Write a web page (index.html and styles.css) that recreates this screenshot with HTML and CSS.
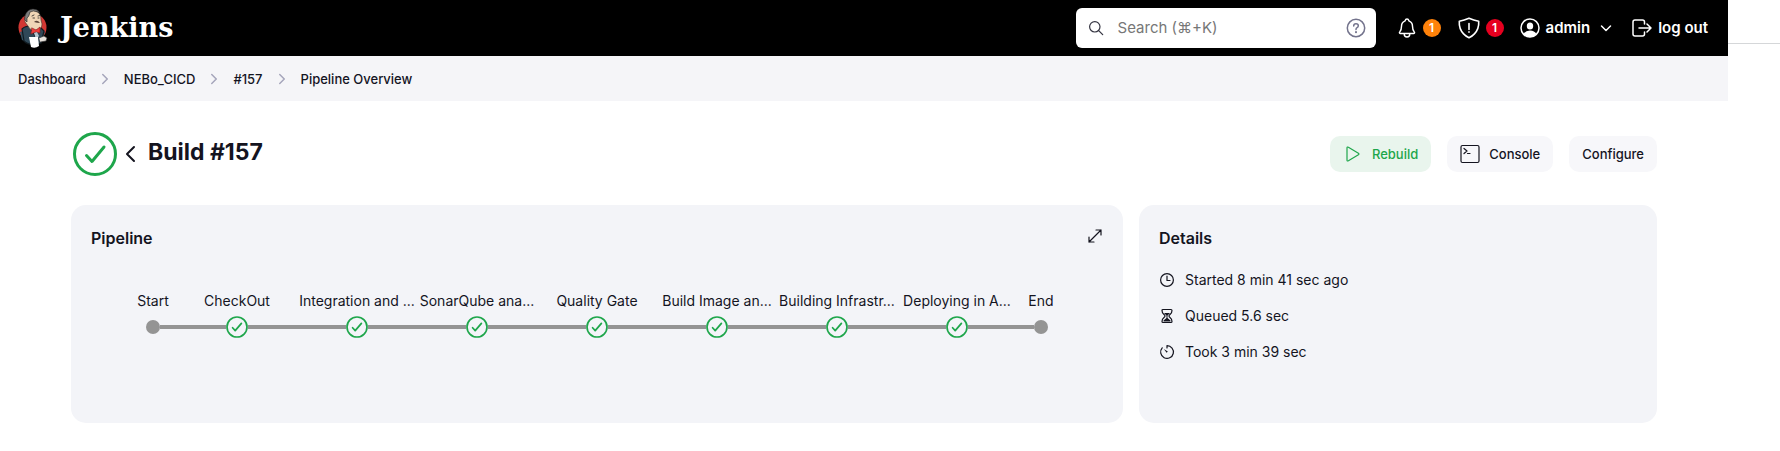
FILE: index.html
```html
<!DOCTYPE html>
<html lang="en">
<head>
<meta charset="utf-8">
<title>Build #157 - Jenkins</title>
<link rel="stylesheet" href="styles.css">
</head>
<body>
<svg class="sprite" aria-hidden="true">
  <symbol id="chevron-right" viewBox="0 0 512 512"><path d="M184 112l144 144-144 144"/></symbol>
  <symbol id="status-ok" viewBox="0 0 22 22"><circle cx="11" cy="11" r="10"/><path d="M6.6 11.7l2.6 2.9 6.2-7.2"/></symbol>
</svg>
<div class="shell">
  <div class="app">
    <header class="header">
      <a class="brand" href="#">
        <svg class="brand-logo" viewBox="0 0 30 40" aria-hidden="true">
          <circle cx="14.500" cy="19.500" r="14" fill="#d33833"/>
          <path d="M2 24l2 8 7 3h12l4-11-7-5-8 2z" fill="#335061"/>
          <path d="M4 21q3-3 8-3l5 10 5-9 4 4-3 12q-11 4-17-2z" fill="#2f4858" stroke="#111b21"/>
          <path d="M8 6q4-5 10-3 5 2 5 9l1 4q0 5-5 6-6 2-9-4l-3-4q-1-5 1-8z" fill="#f0d6b7" stroke="#37302b" stroke-width=".6"/>
          <path d="M7 8Q9 1 15 1q5 0 7 4l-2-1q-5-2-8 0-1 5-3 6v4l-2-2z" fill="#7d7d7d" stroke="#222" stroke-width=".6"/>
          <path d="M14 8l2-1M20 8l2-.5M15 10h1.500M20 10h1" stroke="#222" fill="none" stroke-width=".8"/>
          <path d="M16 14q3-3 6 1-3 0-6-1z" fill="#5a4337"/>
          <path d="M14 20l4 2 4-3v6l-4-1-5 2z" fill="#ef3d3a" stroke="#7d1919" stroke-width=".6"/>
          <path d="M16 25l3-1 2 4-3 3z" fill="#b7c5ce"/>
          <path d="M11 29h9l1 9q-4 3-8 1z" fill="#fff"/>
          <path d="M21 30l5-2 3 2-1 3-6 1z" fill="#e6e0da" stroke="#333" stroke-width=".6"/>
        </svg>
        <span>Jenkins</span>
      </a>
      <form class="search" role="search">
        <svg class="icon-16" viewBox="0 0 16 16" aria-hidden="true"><circle cx="6.800" cy="6.800" r="5.200"/><path d="M10.700 10.700l4 4"/></svg>
        <input type="text" aria-label="Search" placeholder="Search (⌘+K)">
        <a class="search-help" href="#" aria-label="Search help">
          <svg class="icon-20" viewBox="0 0 20 20" aria-hidden="true"><circle cx="10" cy="10" r="8.700"/><path d="M7.700 8q0-2.200 2.300-2.200T12.300 7.800q0 1.300-1.200 1.900T10 11.600"/><path d="M10 14v.2" stroke-width="2"/></svg>
        </a>
      </form>
      <nav class="header-nav" aria-label="User">
        <a class="alert" href="#" aria-label="Notifications, 1">
          <svg class="icon-22" viewBox="0 0 512 512" aria-hidden="true"><path d="M427.680 351.430C402 320 383.870 304 383.870 217.350 383.870 138 343.350 109.730 310 96c-4.430-1.820-8.600-6-9.950-10.550C294.200 65.540 277.800 48 256 48s-38.210 17.550-44 37.470c-1.350 4.600-5.520 8.710-9.950 10.530-33.390 13.750-73.870 41.920-73.870 121.350C128.130 304 110 320 84.320 351.430 73.680 364.450 83 384 101.610 384h308.880c18.510 0 27.770-19.610 17.190-32.570zM320 384v16a64 64 0 01-128 0v-16"/></svg>
          <span class="badge badge-orange">1</span>
        </a>
        <a class="alert" href="#" aria-label="Security warnings, 1">
          <svg class="icon-24" viewBox="0 0 512 512" aria-hidden="true"><path d="M463.120 112.370C373.680 96.330 336.710 84.450 256 48c-80.710 36.450-117.680 48.330-207.120 64.370C32.700 369.130 240.580 457.790 256 464c15.420-6.210 223.300-94.870 207.120-351.630zM256 160v128M256 338v6"/></svg>
          <span class="badge badge-red">1</span>
        </a>
        <a class="account" href="#">
          <svg class="icon-20" viewBox="0 0 20 20" aria-hidden="true"><circle cx="10" cy="10" r="9"/><path class="solid" d="M10 4.500a3.200 3.500 0 010 7 3.200 3.500 0 010-7zM3.500 16q2-3.500 6.500-3.500t6.500 3.500q-2.500 3-6.500 3t-6.500-3z"/></svg>
          <span>admin</span>
          <svg class="icon-12 caret" viewBox="0 0 12 12" aria-hidden="true"><path d="M1.500 4L6 8.500 10.500 4"/></svg>
        </a>
        <a class="logout" href="#">
          <svg class="icon-20" viewBox="0 0 20 20" aria-hidden="true"><path d="M12.500 6V4q0-2-2-2H3Q1 2 1 4v12q0 2 2 2h7.500q2 0 2-2v-2M7 10h12M15 6l4 4-4 4"/></svg>
          <span>log out</span>
        </a>
      </nav>
    </header>
    <nav class="breadcrumbs" aria-label="Breadcrumb">
      <a href="#">Dashboard</a>
      <svg class="icon-16" aria-hidden="true"><use href="#chevron-right"/></svg>
      <a href="#">NEBo_CICD</a>
      <svg class="icon-16" aria-hidden="true"><use href="#chevron-right"/></svg>
      <a href="#">#157</a>
      <svg class="icon-16" aria-hidden="true"><use href="#chevron-right"/></svg>
      <a href="#">Pipeline Overview</a>
    </nav>
    <main class="content">
      <div class="title-bar">
        <svg class="title-status" viewBox="0 0 46 46" role="img" aria-label="Success"><circle cx="24" cy="23" r="20.500"/><path d="M15.500 24.500l5.500 6L33 16"/></svg>
        <a class="back" href="#" aria-label="Back"><svg viewBox="0 0 12 18" aria-hidden="true"><path d="M9 2L2 9l7 7"/></svg></a>
        <h1>Build #157</h1>
        <div class="actions">
          <button class="button button-green" type="button">
            <svg class="icon-20" viewBox="0 0 20 20" aria-hidden="true"><path d="M4 4v12q0 1.500 1.400.8l10-6q1-.8 0-1.600l-10-6Q4 2.500 4 4z"/></svg>
            Rebuild
          </button>
          <button class="button" type="button">
            <svg class="icon-20" viewBox="0 0 20 20" aria-hidden="true"><rect x="1" y="1.500" width="18" height="17" rx="1.500"/><path d="M4 4.500l3 2.500-3 2.500M7.500 9.500H10"/></svg>
            Console
          </button>
          <button class="button" type="button">Configure</button>
        </div>
      </div>
      <div class="cards">
        <section class="card pipeline">
          <div class="card-head">
            <h2>Pipeline</h2>
            <a href="#" aria-label="Expand pipeline"><svg class="icon-16" viewBox="0 0 16 16" aria-hidden="true"><path d="M9 2h5v5M14 2L2 14M2 9v5h5"/></svg></a>
          </div>
          <ol class="stages">
            <li class="stage end-point first"><span class="label">Start</span><span class="track"><i class="dot"></i></span></li>
            <li class="stage"><span class="label">CheckOut</span><span class="track"><svg class="node"><use href="#status-ok"/></svg></span></li>
            <li class="stage"><span class="label">Integration and ...</span><span class="track"><svg class="node"><use href="#status-ok"/></svg></span></li>
            <li class="stage"><span class="label">SonarQube ana...</span><span class="track"><svg class="node"><use href="#status-ok"/></svg></span></li>
            <li class="stage"><span class="label">Quality Gate</span><span class="track"><svg class="node"><use href="#status-ok"/></svg></span></li>
            <li class="stage"><span class="label">Build Image an...</span><span class="track"><svg class="node"><use href="#status-ok"/></svg></span></li>
            <li class="stage"><span class="label">Building Infrastr...</span><span class="track"><svg class="node"><use href="#status-ok"/></svg></span></li>
            <li class="stage"><span class="label">Deploying in A...</span><span class="track"><svg class="node"><use href="#status-ok"/></svg></span></li>
            <li class="stage end-point last"><span class="label">End</span><span class="track"><i class="dot"></i></span></li>
          </ol>
        </section>
        <section class="card details">
          <h2>Details</h2>
          <ul>
            <li><svg class="icon-16" viewBox="0 0 16 16" aria-hidden="true"><circle cx="8" cy="8" r="6.400"/><path d="M8 4v4.500h3"/></svg>Started 8 min 41 sec ago</li>
            <li><svg class="icon-16" viewBox="0 0 16 16" aria-hidden="true"><path d="M4 1.500h8q1 0 1 1Q13 5 11 6.500q-2 1.500 0 3 2 1.500 2 4 0 1-1 1H4q-1 0-1-1Q3 11 5 9.500q2-1.500 0-3Q3 5 3 2.500q0-1 1-1z"/><path class="solid" d="M5 5h6L8.500 7.500v2.500l3 2.500v1h-7v-1l3-2.500V7.500z"/></svg>Queued 5.6 sec</li>
            <li><svg class="icon-16" viewBox="0 0 16 16" aria-hidden="true"><path d="M8 4V1.600A6.400 6.400 0 113.200 3.800"/><path class="solid" d="M4.800 5l4 2.600-1.200 1.200z"/></svg>Took 3 min 39 sec</li>
          </ul>
        </section>
      </div>
    </main>
  </div>
  <div class="side" aria-hidden="true"></div>
</div>
</body>
</html>
```
FILE: styles.css
```css
* { box-sizing: border-box; }

body {
  margin: 0;
  background: #fff;
  color: #14141f;
  font: 14px/20px Inter, "Noto Sans", sans-serif;
}

a { color: inherit; text-decoration: none; }
h1, h2, ul, ol { margin: 0; padding: 0; }
ul, ol { list-style: none; }
svg { flex: none; fill: none; stroke: currentColor; stroke-width: 1.2; stroke-linecap: round; stroke-linejoin: round; }
svg[viewBox="0 0 512 512"] { stroke-width: 32; }
.solid { fill: currentColor; stroke: none; }
.sprite { position: absolute; width: 0; height: 0; }
.icon-12 { width: 12px; height: 12px; }
.icon-16 { width: 16px; height: 16px; }
.icon-20 { width: 20px; height: 20px; }
.icon-22 { width: 22px; height: 22px; }
.icon-24 { width: 24px; height: 24px; }

.shell { display: grid; grid-template-columns: 1fr 52px; }
.side { height: 44px; border-bottom: 1px solid #d5d7d9; }

.header {
  display: flex;
  align-items: center;
  height: 56px;
  padding: 0 20px 0 18px;
  background: #000;
  color: #fff;
}
.brand { display: flex; align-items: center; gap: 12px; margin-right: auto; font: bold 27px/40px "DejaVu Serif", serif; }
.brand-logo { width: 30px; height: 40px; stroke: none; }

.search {
  display: flex;
  align-items: center;
  width: 300px;
  height: 40px;
  padding: 0 10px 0 12px;
  border-radius: 6px;
  background: #fff;
  color: #333340;
}
.search input {
  flex: 1;
  min-width: 0;
  margin-left: 12px;
  padding: 0 2px;
  border: 0;
  outline: 0;
  background: none;
  font: 15px/24px Inter, "DejaVu Sans", sans-serif;
}
.search input::placeholder { color: #777; }
.search-help { display: flex; color: #73738c; }
.search-help svg { stroke-width: 1.5; }

.header-nav { display: flex; align-items: center; gap: 16px; margin-left: 20px; font-size: 15px; font-weight: 600; }
.header-nav a { display: flex; align-items: center; gap: 6px; }
.header-nav svg { stroke-width: 1.5; }
.header-nav .alert { gap: 5px; }
.header-nav .alert svg { stroke-width: 34; }
.header-nav .logout { margin-left: 4px; }
.caret { margin-left: 4px; }
.badge { width: 18px; height: 18px; border-radius: 50%; font-size: 12px; line-height: 18px; text-align: center; }
.badge-orange { background: #ff820a; }
.badge-red { background: #e6001f; }

.breadcrumbs {
  display: flex;
  align-items: center;
  gap: 11px;
  height: 45px;
  padding: 0 18px;
  background: #f5f5f8;
  font-size: 13px;
  font-weight: 500;
}
.breadcrumbs svg { color: #a5a5bb; }
#chevron-right { stroke-width: 48; }

.content { padding: 30px 71px 28px; }
.title-bar { display: flex; align-items: center; height: 46px; margin-bottom: 28px; }
.title-status { width: 46px; height: 46px; color: #1ea64b; stroke-width: 3; }
.back { display: flex; margin: 0 11px 0 8px; }
.back svg { width: 12px; height: 18px; stroke-width: 2; }
h1 { padding-bottom: 4px; font-size: 23px; line-height: 32px; font-weight: 700; }
.actions { display: flex; gap: 16px; margin-left: auto; }
.button {
  display: flex;
  align-items: center;
  gap: 9px;
  height: 36px;
  padding: 0 13px;
  border: 0;
  border-radius: 10px;
  background: #f7f7fa;
  color: inherit;
  font: 500 13px/20px Inter, sans-serif;
}
.button-green { background: #e9f5ed; color: #1ea64b; }

.cards { display: grid; grid-template-columns: repeat(3, minmax(0, 1fr)); gap: 16px; }
.card { min-height: 218px; padding: 20px; border-radius: 15px; background: #f3f4f8; }
.pipeline { grid-column: span 2; }
.card-head { display: flex; justify-content: space-between; align-items: center; }
.card-head a { display: flex; padding-bottom: 4px; }
h2 { font-size: 16px; line-height: 26px; font-weight: 600; }

.stages { display: flex; justify-content: center; margin-top: 38px; }
.stage { display: flex; flex-direction: column; align-items: center; width: 120px; }
.stage.end-point { width: 48px; }
.label { font-size: 14px; line-height: 24px; white-space: nowrap; }
.track { display: flex; align-items: center; width: 100%; height: 28px; }
.track::before, .track::after { content: ""; flex: 1; height: 4px; background: #949494; }
.first .track::before, .last .track::after { background: none; }
.node { width: 22px; height: 22px; color: #1ea64b; stroke-width: 1.7; }
.dot { width: 14px; height: 14px; border-radius: 50%; background: #949494; }

.details ul { display: grid; gap: 16px; margin-top: 19px; }
.details li { display: flex; align-items: center; gap: 10px; }
```
